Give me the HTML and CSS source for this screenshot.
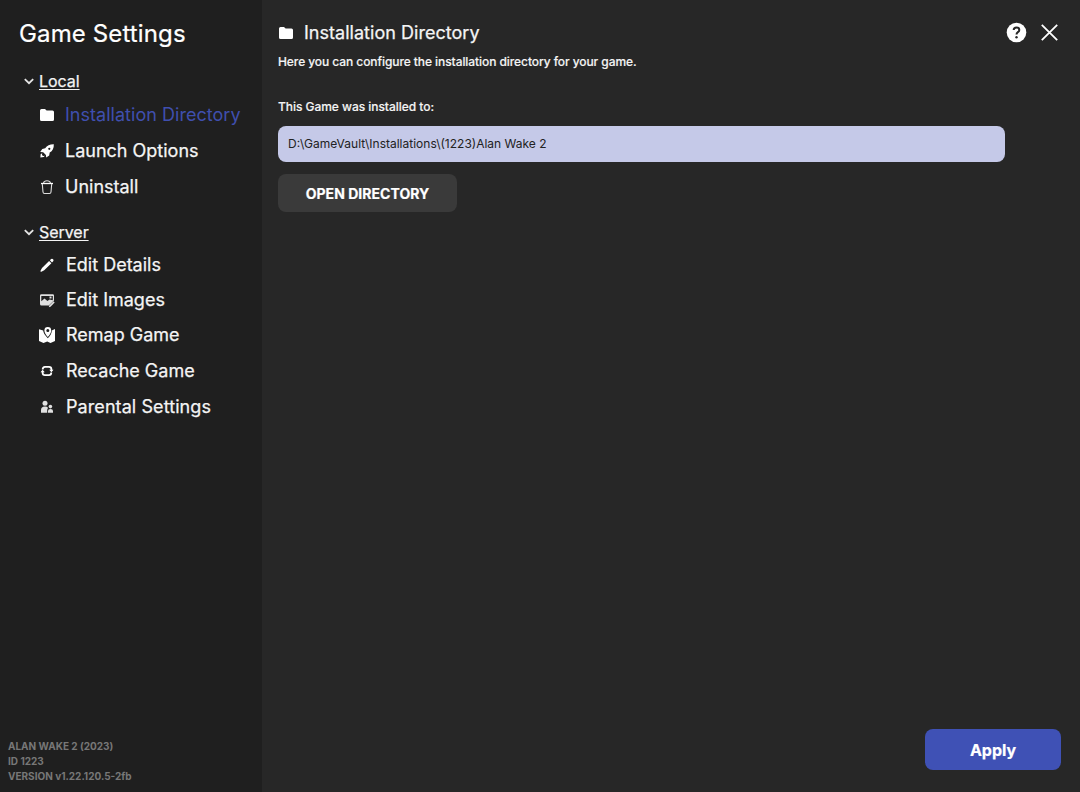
FILE: index.html
```html
<!DOCTYPE html>
<html lang="en">
<head>
<meta charset="utf-8">
<title>Game Settings</title>
<link rel="stylesheet" href="styles.css">
</head>
<body>
<div class="window">
  <aside class="sidebar">
    <h1 class="title"><span>Game Settings</span></h1>
    <nav class="group local">
      <div class="group-head">
        <svg class="chevron" viewBox="0 0 10 7"><path d="M.8 1.1 5 5.2 9.2 1.1"/></svg>
        <span class="group-name">Local</span>
      </div>
      <div class="item active">
        <svg class="icon" viewBox="0 0 18 18"><path d="M2 4.500Q2 3 3.500 3H7l1.600 1.500h5.900Q16 4.500 16 6v7.500Q16 15 14.500 15h-11Q2 15 2 13.500z"/></svg>
        <span>Installation Directory</span>
      </div>
      <div class="item">
        <svg class="icon" viewBox="0 0 18 18"><path fill-rule="evenodd" d="M15.800 2.200C12 2.100 9 3.500 7.200 6.300L4.300 6.900 2.200 10 5.200 10.200 7.900 12.900 8.200 15.600 11.200 13.600 11.700 10.600C14.600 8.900 16 6 15.800 2.200zM11.300 5.700a1.100 1.100 0 1 1 0 2.200 1.100 1.100 0 0 1 0-2.200zM4.200 11.200 2.600 12.200 2.400 15.500 5.800 15.100 6.800 13.700 5 14 4 13z"/></svg>
        <span>Launch Options</span>
      </div>
      <div class="item">
        <svg class="icon line" viewBox="0 0 18 18"><path class="lid" d="M3 5.500h12"/><path d="M5.500 5Q6 2.700 9 2.700T12.500 5M4.300 6l.7 8q.1 1.500 1.500 1.500h5q1.400 0 1.500-1.500l.7-8"/></svg>
        <span>Uninstall</span>
      </div>
    </nav>
    <nav class="group server">
      <div class="group-head">
        <svg class="chevron" viewBox="0 0 10 7"><path d="M.8 1.100 5 5.200 9.200 1.100"/></svg>
        <span class="group-name">Server</span>
      </div>
      <div class="item">
        <svg class="icon" viewBox="0 0 18 18"><path d="m11.900 4.300 1.200-1.200q1-.8 2 .1.900 1 .1 2L14 6.400zM11.100 4.900l2.300 2.300-7.200 7-2.800 1.500q-1.300.3-.9-1l1.500-2.700z"/></svg>
        <span>Edit Details</span>
      </div>
      <div class="item">
        <svg class="icon soft" viewBox="0 0 18 18"><path fill-rule="evenodd" d="M3.500 3.200h11.200Q16 3.200 16 4.500v5L10.800 14.500H3.500Q2 14.500 2 13V4.500Q2 3.200 3.500 3.200zM3.300 5v5.300l3.200-2.900 2.900 2.500 2.200-1.500 3.200.8V5zM11.500 5.500h2v2h-2z"/><path d="m15.500 10.300 1.200 1.200-4.200 4.200-1.700.5.500-1.700z"/></svg>
        <span>Edit Images</span>
      </div>
      <div class="item">
        <svg class="icon" viewBox="0 0 18 18"><path fill-rule="evenodd" d="M1 3.200 5.200 4.600Q5.200 7.500 9.800 12.300 14 8 13.800 4.500L17 3v12l-4.500 2-3.300-1.400L5.500 17 1 15z"/><path fill-rule="evenodd" d="M9.800 1a3.400 3.400 0 0 1 3.400 3.400Q13.200 7 9.800 11 6.400 7 6.400 4.400A3.400 3.400 0 0 1 9.800 1zm0 2a1.500 1.500 0 1 0 0 3 1.500 1.500 0 0 0 0-3z"/></svg>
        <span>Remap Game</span>
      </div>
      <div class="item">
        <svg class="icon" viewBox="0 0 18 18"><g class="cycle"><path d="M4.700 7.500Q4.700 4.800 7 4.800h4q2.400 0 2.400 2.400v1M13.300 10.500q0 2.700-2.300 2.700H7q-2.400 0-2.400-2.400v-1"/></g><path d="M11.200 7.700h4.300l-2.100 2.500zM2.500 10.300h4.300L4.600 7.800z"/></svg>
        <span>Recache Game</span>
      </div>
      <div class="item">
        <svg class="icon soft" viewBox="0 0 18 18"><circle cx="7" cy="5.300" r="2.500"/><circle cx="12.400" cy="8.600" r="1.800"/><path d="M3 14.700V12q0-3.500 4-3.500 2 0 3 1.300l-.8 1.900v3zM10 14.700V13q0-2 2.500-2t2.500 2v1.700z"/></svg>
        <span>Parental Settings</span>
      </div>
    </nav>
    <footer class="meta">
      <div><span>ALAN WAKE 2 (2023)</span></div>
      <div><span>ID 1223</span></div>
      <div><span>VERSION v1.22.120.5-2fb</span></div>
    </footer>
  </aside>
  <main class="content">
    <header class="head">
      <svg class="icon" viewBox="0 0 18 18"><path d="M2 4.500Q2 3 3.500 3H7l1.600 1.500h5.900Q16 4.500 16 6v7.500Q16 15 14.500 15h-11Q2 15 2 13.500z"/></svg>
      <h2 class="heading"><span>Installation Directory</span></h2>
      <svg class="help" viewBox="0 0 21 21"><circle cx="10.500" cy="10.500" r="9.800"/><path d="M7.700 8.100Q7.700 5.600 10.500 5.600t2.800 2.400q0 1.300-1.400 2.200-1.400.9-1.400 2.300"/><circle class="dot" cx="10.500" cy="15.300" r="1.200"/></svg>
      <svg class="close" viewBox="0 0 17 17"><path d="m.8.8 15.400 15.400M16.200.8.8 16.200"/></svg>
    </header>
    <p class="text intro"><span>Here you can configure the installation directory for your game.</span></p>
    <p class="text label"><span>This Game was installed to:</span></p>
    <div class="path"><span>D:\GameVault\Installations\(1223)Alan Wake 2</span></div>
    <button class="open"><span>OPEN DIRECTORY</span></button>
    <button class="apply"><span>Apply</span></button>
  </main>
</div>
</body>
</html>
```

FILE: styles.css
```css
* { box-sizing: border-box; }
body { margin: 0; font-family: Inter, sans-serif; color: #f4f4f4; }
h1, h2, p { margin: 0; font-weight: 400; }
button { border: 0; padding: 0; color: #fff; font-family: inherit; font-weight: 700; }
.window { display: flex; width: 1080px; height: 792px; overflow: hidden; background: #272727; }
.sidebar { display: flex; flex-direction: column; width: 262px; background: #1f1f1f; }
.title { padding: 18px 0 0 19px; font-size: 24px; line-height: 32px; letter-spacing: .13px; color: #fff; -webkit-text-stroke: .2px; }
.local { margin-top: 19px; }
.server { margin-top: 15px; }
.group-head { display: flex; align-items: center; gap: 5px; height: 24px; padding-left: 24px; font-size: 16px; line-height: 24px; letter-spacing: -.05px; -webkit-text-stroke: .25px; }
.chevron { width: 10px; height: 7px; fill: none; stroke: #e4e4e4; stroke-width: 1.8; }
.group-name { text-decoration: underline; text-decoration-thickness: 1px; text-underline-offset: 2px; }
.local .group-head { margin-bottom: 4px; }
.server .group-head { margin-bottom: 3px; }
.item { display: flex; align-items: center; gap: 9px; height: 36px; padding-left: 38px; font-size: 18px; line-height: 22px; -webkit-text-stroke: .25px; }
.server .item { height: 35px; gap: 10px; }
.server .item span { padding-top: 1px; }
.server .item:nth-child(n+5) { margin-top: 1px; }
.server .item:last-child { letter-spacing: .08px; }
.item.active { color: #3f4fae; letter-spacing: .03px; -webkit-text-stroke: 0; }
.icon { flex: none; width: 18px; height: 18px; fill: #fff; }
.line { fill: none; stroke: #ddd; stroke-width: 1.1; }
.lid { stroke: #fff; stroke-width: 1.3; }
.soft { fill: #e0e0e0; }
.cycle { fill: none; stroke: #fff; stroke-width: 1.8; }
.local .icon { margin-bottom: 1px; }
.local .item span { padding-bottom: 1px; }
.meta { margin-top: auto; padding: 0 0 8px 8px; font-size: 10px; line-height: 15px; font-weight: 700; color: #777; }
.content { display: flex; flex: 1; flex-direction: column; align-items: flex-start; padding: 17px 19px 22px 16px; }
.head { display: flex; align-items: center; align-self: stretch; height: 32px; padding-right: 3px; }
.head .icon { margin-left: -1px; }
.heading { flex: 1; padding: 0 0 2px 9px; font-size: 18px; letter-spacing: .03px; -webkit-text-stroke: .25px; }
.help { width: 21px; height: 21px; margin: 0 14px 1px 0; fill: #fff; }
.help path { fill: none; stroke: #272727; stroke-width: 2; }
.help .dot { fill: #272727; }
.close { width: 17px; height: 17px; margin-bottom: 1px; fill: none; stroke: #fff; stroke-width: 1.8; }
.text { font-size: 12px; line-height: 16px; font-weight: 500; letter-spacing: -.075px; -webkit-text-stroke: .15px; }
.intro { margin-top: 5px; }
.label { margin-top: 29px; letter-spacing: -.04px; }
.path { width: 727px; height: 36px; margin-top: 11px; padding-left: 10px; border-radius: 8px; background: #c5c9e8; color: #222; font-size: 12px; line-height: 36px; }
.open { width: 179px; height: 38px; margin-top: 12px; border-radius: 8px; background: #3a3a3a; font-size: 14px; letter-spacing: .03px; -webkit-text-stroke: .2px; }
.apply { width: 136px; height: 41px; margin-top: auto; align-self: flex-end; border-radius: 8px; background: #3f51b5; font-size: 16px; -webkit-text-stroke: .2px; }
```
